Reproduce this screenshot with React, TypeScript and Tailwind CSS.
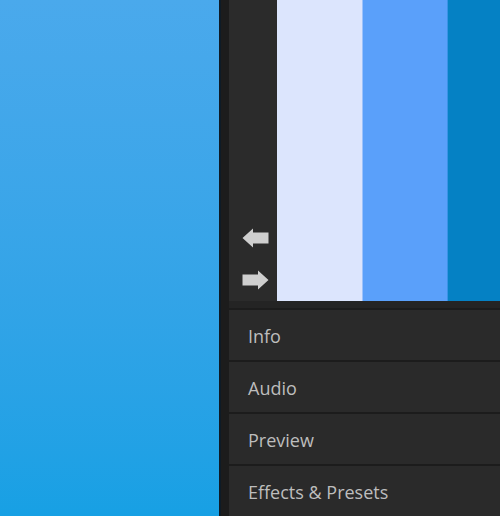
import React from 'react';

const panels = ['Info', 'Audio', 'Preview', 'Effects & Presets'];

function ArrowLeft() {
  return (
    <svg width="27" height="20" viewBox="0 0 27 20">
      <path d="M0.5 10 L11 0.5 L11 4.5 L26.5 4.5 L26.5 15.5 L11 15.5 L11 19.5 Z" fill="#cfcfcf" />
    </svg>
  );
}

function ArrowRight() {
  return (
    <svg width="27" height="20" viewBox="0 0 27 20">
      <path d="M26.5 10 L16 0.5 L16 4.5 L0.5 4.5 L0.5 15.5 L16 15.5 L16 19.5 Z" fill="#cfcfcf" />
    </svg>
  );
}

export default function App() {
  return (
    <div className="flex h-[516px] w-[500px] overflow-hidden" style={{ fontFamily: '"Open Sans", "Noto Sans", sans-serif' }}>
      <div className="w-[219px] shrink-0 bg-gradient-to-b from-[#4aa9ec] to-[#17a0e4]" />
      <div className="w-[2px] shrink-0 bg-[#0e1b26]" />
      <div className="w-[8px] shrink-0 bg-[#1c1c1c]" />
      <div className="flex min-w-0 flex-1 flex-col bg-[#1c1c1c]">
        <div className="flex h-[301px] shrink-0 bg-[#2b2b2b]">
          <div className="flex w-[48px] shrink-0 flex-col items-center justify-end gap-[22px] pb-[11px] pl-[4px]">
            <ArrowLeft />
            <ArrowRight />
          </div>
          <div className="w-[85px] shrink-0 bg-[#dce5fd]" />
          <div className="w-[1px] shrink-0 bg-[#9cc2fb]" />
          <div className="w-[84px] shrink-0 bg-[#5aa0fa]" />
          <div className="w-[1px] shrink-0 bg-[#3a93e6]" />
          <div className="flex-1 bg-[#0581c4]" />
        </div>
        <div className="h-[7px] shrink-0 bg-[#242424]" />
        <div className="flex flex-1 flex-col gap-[2px] pt-[2px]">
          {panels.map((p) => (
            <div key={p} className="flex h-[50px] shrink-0 items-center bg-[#2a2a2a] pl-[19px] pt-[3px] text-[18px] text-[#bdbdbd]">
              {p}
            </div>
          ))}
        </div>
      </div>
    </div>
  );
}
